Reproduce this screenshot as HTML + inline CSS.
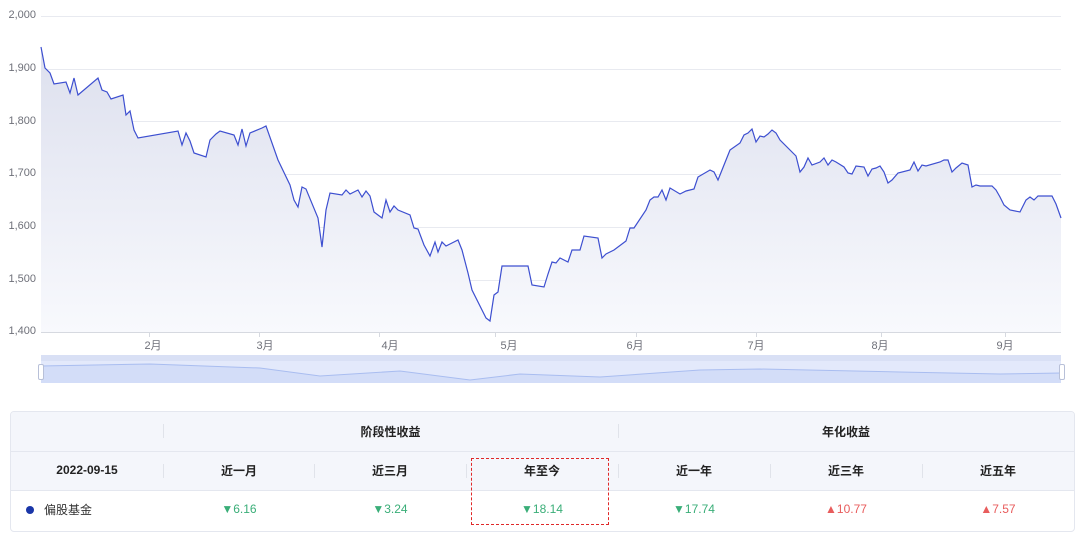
<!DOCTYPE html>
<html><head><meta charset="utf-8"><style>
body{margin:0;width:1080px;height:534px;background:#fff;font-family:"Liberation Sans","Noto Sans CJK SC",sans-serif;position:relative;overflow:hidden}
.yl{position:absolute;left:0;width:36px;text-align:right;font-size:11px;color:#6e7079}
.xl{position:absolute;top:337px;font-size:11px;color:#6e7079;width:40px;text-align:center;margin-left:-20px}
.tbl{position:absolute;left:10px;top:411px;width:1063px;height:119px;border:1px solid #e4e7ef;border-radius:4px;overflow:hidden}
.r{position:absolute;left:0;width:1063px}
.c{position:absolute;text-align:center;font-size:12px}
.sep{position:absolute;width:1px;height:14px;background:#e0e3ea}
.g{color:#3aae78}.rd{color:#e85c5c}
</style></head><body>
<div class="yl" style="top:9px">2,000</div>
<div class="yl" style="top:62px">1,900</div>
<div class="yl" style="top:115px">1,800</div>
<div class="yl" style="top:167px">1,700</div>
<div class="yl" style="top:220px">1,600</div>
<div class="yl" style="top:273px">1,500</div>
<div class="yl" style="top:325px">1,400</div>
<svg width="1080" height="400" style="position:absolute;left:0;top:0">
<defs><linearGradient id="gr" x1="0" y1="0" x2="0" y2="1"><stop offset="0" stop-color="#dde0ee"/><stop offset="1" stop-color="#f8f9fd"/></linearGradient></defs>
<g stroke="#e8eaf0" stroke-width="1">
<line x1="41" x2="1061" y1="16.5" y2="16.5"/><line x1="41" x2="1061" y1="69.5" y2="69.5"/><line x1="41" x2="1061" y1="121.5" y2="121.5"/><line x1="41" x2="1061" y1="174.5" y2="174.5"/><line x1="41" x2="1061" y1="227.5" y2="227.5"/><line x1="41" x2="1061" y1="280.5" y2="280.5"/></g>
<line x1="41" x2="1061" y1="332.5" y2="332.5" stroke="#d6d9e0"/>
<g stroke="#d6d9e0"><line x1="149.5" x2="149.5" y1="332" y2="337"/><line x1="259.5" x2="259.5" y1="332" y2="337"/><line x1="379.5" x2="379.5" y1="332" y2="337"/><line x1="495.5" x2="495.5" y1="332" y2="337"/><line x1="636.5" x2="636.5" y1="332" y2="337"/><line x1="756.5" x2="756.5" y1="332" y2="337"/><line x1="881.5" x2="881.5" y1="332" y2="337"/><line x1="1005.5" x2="1005.5" y1="332" y2="337"/></g>
<polygon fill="url(#gr)" points="41,332 41,47 45,68 50,73 54,84 66,82 70,93 74,78 78,95 98,78 102,90 107,92 111,99 123,95 126,115 130,111 134,130 138,138 178,131 182,145 186,133 190,141 194,153 206,157 210,140 216,134 220,131 234,135 238,145 242,129 246,146 250,133 262,128 266,126 278,160 290,185 294,200 298,207 302,187 306,189 318,218 322,247 326,210 330,193 342,195 346,190 350,194 354,192 358,190 362,197 366,191 370,196 374,212 378,215 382,218 386,200 390,212 394,206 398,210 410,215 414,228 418,229 424,245 430,256 435,242 438,252 442,242 446,246 450,244 458,240 462,250 468,273 472,290 486,318 490,321 494,295 498,292 502,266 528,266 532,285 544,287 548,274 552,262 556,263 560,258 568,262 572,250 580,250 584,236 598,238 602,258 606,254 614,250 626,241 630,228 634,228 646,210 650,200 654,197 658,197 662,190 666,200 670,188 680,194 686,191 694,189 698,177 710,170 714,172 718,180 722,170 730,150 740,143 744,135 748,133 752,129 756,142 760,136 764,137 768,134 772,130 776,133 780,140 796,156 800,172 804,167 808,158 812,165 820,162 824,158 828,165 832,160 836,162 844,167 848,173 852,174 856,166 864,167 868,176 872,169 876,168 880,166 884,172 888,183 892,180 898,173 910,170 914,162 918,171 922,165 926,166 940,162 944,160 948,160 952,172 956,168 962,163 968,165 972,187 976,185 980,186 992,186 996,190 1000,197 1004,205 1010,210 1020,212 1026,200 1030,197 1034,200 1038,196 1046,196 1052,196 1056,204 1061,218 1061,332"/>
<polyline fill="none" stroke="#3d4fd0" stroke-width="1.2" points="41,47 45,68 50,73 54,84 66,82 70,93 74,78 78,95 98,78 102,90 107,92 111,99 123,95 126,115 130,111 134,130 138,138 178,131 182,145 186,133 190,141 194,153 206,157 210,140 216,134 220,131 234,135 238,145 242,129 246,146 250,133 262,128 266,126 278,160 290,185 294,200 298,207 302,187 306,189 318,218 322,247 326,210 330,193 342,195 346,190 350,194 354,192 358,190 362,197 366,191 370,196 374,212 378,215 382,218 386,200 390,212 394,206 398,210 410,215 414,228 418,229 424,245 430,256 435,242 438,252 442,242 446,246 450,244 458,240 462,250 468,273 472,290 486,318 490,321 494,295 498,292 502,266 528,266 532,285 544,287 548,274 552,262 556,263 560,258 568,262 572,250 580,250 584,236 598,238 602,258 606,254 614,250 626,241 630,228 634,228 646,210 650,200 654,197 658,197 662,190 666,200 670,188 680,194 686,191 694,189 698,177 710,170 714,172 718,180 722,170 730,150 740,143 744,135 748,133 752,129 756,142 760,136 764,137 768,134 772,130 776,133 780,140 796,156 800,172 804,167 808,158 812,165 820,162 824,158 828,165 832,160 836,162 844,167 848,173 852,174 856,166 864,167 868,176 872,169 876,168 880,166 884,172 888,183 892,180 898,173 910,170 914,162 918,171 922,165 926,166 940,162 944,160 948,160 952,172 956,168 962,163 968,165 972,187 976,185 980,186 992,186 996,190 1000,197 1004,205 1010,210 1020,212 1026,200 1030,197 1034,200 1038,196 1046,196 1052,196 1056,204 1061,218"/>
<rect x="41" y="355" width="1020" height="28" fill="#e3e9fb"/>
<rect x="41" y="355" width="1020" height="6" fill="#d9e0f5"/>
<path d="M41,366 L150,364 L260,368 L320,376 L400,371 L470,380 L520,374 L600,377 L700,370 L760,369 L900,372 L1000,374 L1061,373 L1061,383 L41,383Z" fill="#d3ddf8"/>
<polyline fill="none" stroke="#a9bdf0" stroke-width="1" points="41,366 150,364 260,368 320,376 400,371 470,380 520,374 600,377 700,370 760,369 900,372 1000,374 1061,373"/>
<rect x="38.5" y="364.5" width="5" height="15" rx="1.5" fill="#fff" stroke="#b8c0d8"/>
<rect x="1059.5" y="364.5" width="5" height="15" rx="1.5" fill="#fff" stroke="#b8c0d8"/>
</svg>
<div class="xl" style="left:153px">2月</div><div class="xl" style="left:265px">3月</div><div class="xl" style="left:390px">4月</div><div class="xl" style="left:509px">5月</div><div class="xl" style="left:635px">6月</div><div class="xl" style="left:756px">7月</div><div class="xl" style="left:880px">8月</div><div class="xl" style="left:1005px">9月</div>
<div class="tbl">
 <div class="r" style="top:0;height:39px;background:#f4f6fb;border-bottom:1px solid #e4e7ef">
  <div class="sep" style="left:152px;top:12px"></div><div class="sep" style="left:607px;top:12px"></div>
  <div class="c" style="left:152px;width:455px;top:11px;font-weight:bold;color:#222">阶段性收益</div>
  <div class="c" style="left:607px;width:456px;top:11px;font-weight:bold;color:#222">年化收益</div>
 </div>
 <div class="r" style="top:40px;height:38px;background:#f4f6fb;border-bottom:1px solid #e4e7ef;font-weight:bold;color:#222">
  <div class="c" style="left:0;width:152px;top:11px;font-weight:bold">2022-09-15</div>
  <div class="sep" style="left:152px;top:12px"></div><div class="sep" style="left:303px;top:12px"></div><div class="sep" style="left:455px;top:12px"></div><div class="sep" style="left:607px;top:12px"></div><div class="sep" style="left:759px;top:12px"></div><div class="sep" style="left:911px;top:12px"></div>
  <div class="c" style="left:152px;width:152px;top:10px;font-weight:bold">近一月</div>
  <div class="c" style="left:303px;width:152px;top:10px;font-weight:bold">近三月</div>
  <div class="c" style="left:455px;width:152px;top:10px;font-weight:bold">年至今</div>
  <div class="c" style="left:607px;width:152px;top:10px;font-weight:bold">近一年</div>
  <div class="c" style="left:759px;width:152px;top:10px;font-weight:bold">近三年</div>
  <div class="c" style="left:911px;width:152px;top:10px;font-weight:bold">近五年</div>
 </div>
 <div class="r" style="top:79px;height:40px">
  <div style="position:absolute;left:15px;top:15px;width:8px;height:8px;border-radius:50%;background:#1a36a8"></div>
  <div style="position:absolute;left:33px;top:10px;font-size:12px;color:#333">偏股基金</div>
  <div class="c g" style="left:152px;width:152px;top:11px">▼6.16</div>
  <div class="c g" style="left:303px;width:152px;top:11px">▼3.24</div>
  <div class="c g" style="left:455px;width:152px;top:11px">▼18.14</div>
  <div class="c g" style="left:607px;width:152px;top:11px">▼17.74</div>
  <div class="c rd" style="left:759px;width:152px;top:11px">▲10.77</div>
  <div class="c rd" style="left:911px;width:152px;top:11px">▲7.57</div>
 </div>
</div>
<div style="position:absolute;left:471px;top:458px;width:136px;height:65px;border:1.5px dashed #e02828"></div>
</body></html>
